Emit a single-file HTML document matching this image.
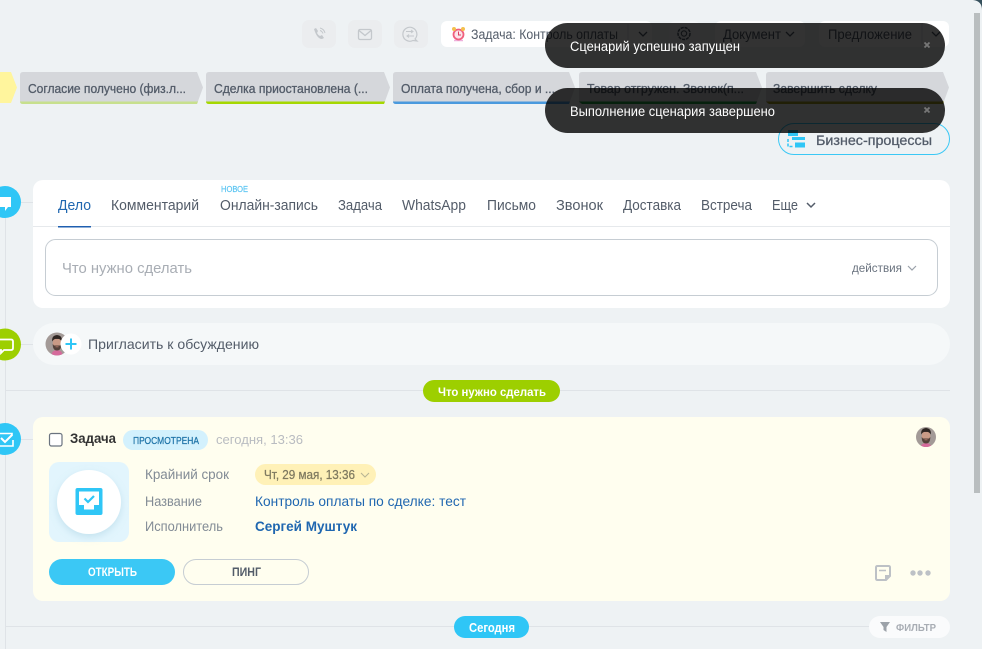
<!DOCTYPE html>
<html lang="ru"><head><meta charset="utf-8"><title>Задача</title>
<style>
html,body{margin:0;padding:0;width:982px;height:649px;overflow:hidden;background:#eef2f4}
svg{display:block}
text{font-family:"Liberation Sans","DejaVu Sans",sans-serif;white-space:pre}
.tab{font-size:14.5px;fill:#535c69}
.st{font-size:12.500px;fill:#535c69;stroke:#535c69;stroke-width:.3}
.lb{font-size:13.500px;fill:#828b95}
</style></head><body>
<svg width="982" height="649" viewBox="0 0 982 649" xmlns="http://www.w3.org/2000/svg">
<defs>
<filter id="sh" x="-30%" y="-30%" width="160%" height="170%"><feDropShadow dx="0" dy="3" stdDeviation="4" flood-color="#7fb6cc" flood-opacity=".3"/></filter>
<clipPath id="a1"><circle cx="57" cy="344" r="11.500"/></clipPath>
<clipPath id="a2"><circle cx="926" cy="437" r="10"/></clipPath>
<g id="face">
<rect x="-12" y="-12" width="24" height="24" fill="#a39a97"/>
<path d="M-6 12 Q-5 6 0 6 Q5 6 6 12Z" fill="#d56a9b"/>
<ellipse cx="0" cy="-1" rx="4.300" ry="6" fill="#c99a86"/>
<path d="M-4.800 -2.500 Q-5.500 -8.500 0 -9 Q5.500 -8.500 4.800 -2.500 Q3 -5.500 0 -5 Q-3 -5.500 -4.800 -2.500Z" fill="#2e2522"/>
<path d="M-4.300 0 Q-4.300 6.500 0 6.500 Q4.300 6.500 4.300 0 L3 1.500 H-3Z" fill="#54413a"/>
<path d="M-1.500 2.800 H1.500" stroke="#b5796a" stroke-width=".8"/>
</g>
</defs>
<rect width="982" height="649" fill="#eef2f4"/>
<path d="M973 0 Q982 1 982 10 V0Z" fill="#35505c"/>
<rect x="974" y="13" width="6" height="480" fill="#b9bebf"/>

<!-- top buttons -->
<rect x="302" y="20" width="34" height="28" rx="7" fill="#ebedef"/>
<rect x="348" y="20" width="34" height="28" rx="7" fill="#ebedef"/>
<rect x="394" y="20" width="34" height="28" rx="7" fill="#ebedef"/>
<path d="M314 29 l2 -1 2 3 -1 2 q1 2 3 3 l2 -1 2 3 -2 1 q-5 0 -8 -10z" fill="#c4c8cc"/>
<path d="M320 28 q4 1 5 5 M320 30.500 q2 .5 3 3" fill="none" stroke="#c4c8cc" stroke-width="1"/>
<rect x="358.500" y="29.500" width="13" height="10" rx="1.500" fill="none" stroke="#c4c8cc" stroke-width="1.300"/>
<path d="M359 30.500 L365 35.500 L371 30.500" fill="none" stroke="#c4c8cc" stroke-width="1.300"/>
<path d="M417 41 L415 39 A7 7 0 1 0 413 40.500 L417 41Z" fill="none" stroke="#c4c8cc" stroke-width="1.200"/>
<path d="M406 31.500 h7 m-2 -1.500 l2 1.500 -2 1.500 M414 36 h-7 m2 -1.500 l-2 1.500 2 1.500" fill="none" stroke="#c4c8cc" stroke-width="1"/>

<rect x="441" y="21" width="211" height="26" rx="6" fill="#fff"/>
<path d="M454 40.500 h9" stroke="#eeb0dc" stroke-width="1.500"/>
<circle cx="458.500" cy="34.500" r="5" fill="#fbe4ea" stroke="#f0607e" stroke-width="1.800"/>
<path d="M458.500 31.500 V35 H461" fill="none" stroke="#d8405e" stroke-width="1"/>
<circle cx="454" cy="29" r="2" fill="#f4c04e"/><circle cx="463" cy="29" r="2" fill="#f4c04e"/>
<text x="471" y="39" font-size="13.500" fill="#535c69" textLength="147" lengthAdjust="spacingAndGlyphs">Задача: Контроль оплаты</text>
<path d="M628 24 V44" stroke="#e4e7ea"/>
<path d="M639 32 l4 4 4 -4" fill="none" stroke="#535c69" stroke-width="1.300"/>
<rect x="669" y="21" width="31" height="26" rx="6" fill="#f3f5f7"/>
<circle cx="684" cy="33.500" r="6" fill="none" stroke="#535c69" stroke-width="1.500" stroke-dasharray="3.200 .9"/>
<circle cx="684" cy="33.500" r="2.700" fill="none" stroke="#535c69" stroke-width="1.100"/>
<rect x="715" y="21" width="90" height="26" rx="6" fill="#fff"/>
<text x="723" y="39" font-size="13.500" fill="#535c69" textLength="58" lengthAdjust="spacingAndGlyphs">Документ</text>
<path d="M786 32 l4 4 4 -4" fill="none" stroke="#535c69" stroke-width="1.300"/>
<rect x="819" y="21" width="130" height="26" rx="6" fill="#fff"/>
<text x="828" y="39" font-size="13.500" fill="#535c69" textLength="84" lengthAdjust="spacingAndGlyphs">Предложение</text>
<path d="M922 24 V44" stroke="#e4e7ea"/>
<path d="M932 32 l4 4 4 -4" fill="none" stroke="#535c69" stroke-width="1.300"/>

<!-- stages -->
<path d="M0 72 H11 L17 87.500 L11 103 H0Z" fill="#fff59d"/>
<path d="M20 75 Q20 72 23 72 H197 L203 87.500 L197 104 H23 Q20 104 20 101Z" fill="#d5d7db"/>
<path d="M20 101.500 Q20 104 23 104 H197 L198 101.500Z" fill="#c7e08d"/>
<path d="M206 75 Q206 72 209 72 H384 L390 87.500 L384 104 H209 Q206 104 206 101Z" fill="#d5d7db"/>
<path d="M206 101.500 Q206 104 209 104 H384 L385 101.500Z" fill="#a5d800"/>
<path d="M393 75 Q393 72 396 72 H569 L575 87.500 L569 104 H396 Q393 104 393 101Z" fill="#d5d7db"/>
<path d="M393 101.500 Q393 104 396 104 H569 L570 101.500Z" fill="#4a9ade"/>
<path d="M579 75 Q579 72 582 72 H756 L762 87.500 L756 104 H582 Q579 104 579 101Z" fill="#d5d7db"/>
<path d="M579 101.500 H757 L756 104 H582Z" fill="#1fa040"/>
<path d="M766 75 Q766 72 769 72 H943 L949 87.500 L943 104 H769 Q766 104 766 101Z" fill="#d5d7db"/>
<path d="M766 101.500 H944 L943 104 H769Z" fill="#a09a20"/>
<text class="st" x="28" y="93" textLength="158" lengthAdjust="spacingAndGlyphs">Согласие получено (физ.л...</text>
<text class="st" x="214" y="93" textLength="154" lengthAdjust="spacingAndGlyphs">Сделка приостановлена (...</text>
<text class="st" x="401" y="93" textLength="154" lengthAdjust="spacingAndGlyphs">Оплата получена, сбор и ...</text>
<text class="st" x="587" y="93" textLength="157" lengthAdjust="spacingAndGlyphs">Товар отгружен. Звонок(п...</text>
<text class="st" x="773" y="93" textLength="104" lengthAdjust="spacingAndGlyphs">Завершить сделку</text>

<!-- BP button -->
<rect x="778.500" y="123.500" width="171" height="31" rx="15.500" fill="#eef2f4" stroke="#3bc8f5"/>
<rect x="788" y="130" width="10" height="6" fill="#2fc6f6"/>
<rect x="792" y="137" width="13" height="3" fill="#2fc6f6"/>
<rect x="795" y="142.500" width="10" height="5" fill="#2fc6f6"/>
<path d="M788 139 v7.500 h5" fill="none" stroke="#2fc6f6" stroke-width="1.500" stroke-dasharray="3 1.500"/>
<text x="816" y="145" font-size="14" fill="#535c69" stroke="#535c69" stroke-width=".3" textLength="116" lengthAdjust="spacingAndGlyphs">Бизнес-процессы</text>

<!-- timeline -->
<path d="M5.500 218 V649" stroke="#dfe3e7"/>
<path d="M21 202.500 H33 M21 344.500 H33 M21 439.500 H33 M5 390.500 H950 M5 626.500 H950" stroke="#dfe3e7"/>
<circle cx="5" cy="202" r="16" fill="#2fc6f6"/>
<path d="M-2 197 H11 V207 H8 L5 211 V207 H-2Z" fill="#fff"/>
<circle cx="5" cy="344.500" r="16" fill="#9dcf00"/>
<path d="M-3 339.500 H11 Q13 339.500 13 341.500 V348 Q13 350 11 350 H4 L1 353 V350 H-3" fill="none" stroke="#fff" stroke-width="1.800"/>
<circle cx="5" cy="439" r="16" fill="#2fc6f6"/>
<path d="M-2 433.500 H12 V436 M-2 446 H13 V440" fill="none" stroke="#fff" stroke-width="1.600"/>
<path d="M1 438 l4 4 7 -7" fill="none" stroke="#fff" stroke-width="2"/>

<!-- editor card -->
<rect x="33" y="180" width="917" height="128" rx="10" fill="#fff"/>
<path d="M33 226.500 H950" stroke="#e6e9ec"/>
<rect x="58" y="226" width="33" height="1.500" fill="#1f5fb0"/>
<text x="221" y="192" font-size="8.500" fill="#5cc5f2" stroke="#5cc5f2" stroke-width=".2" textLength="27" lengthAdjust="spacingAndGlyphs">НОВОЕ</text>
<text class="tab" x="58" y="210" style="fill:#2067b0" textLength="33" lengthAdjust="spacingAndGlyphs">Дело</text>
<text class="tab" x="111" y="210" textLength="88" lengthAdjust="spacingAndGlyphs">Комментарий</text>
<text class="tab" x="220" y="210" textLength="98" lengthAdjust="spacingAndGlyphs">Онлайн-запись</text>
<text class="tab" x="338" y="210" textLength="44" lengthAdjust="spacingAndGlyphs">Задача</text>
<text class="tab" x="402" y="210" textLength="64" lengthAdjust="spacingAndGlyphs">WhatsApp</text>
<text class="tab" x="487" y="210" textLength="49" lengthAdjust="spacingAndGlyphs">Письмо</text>
<text class="tab" x="556" y="210" textLength="47" lengthAdjust="spacingAndGlyphs">Звонок</text>
<text class="tab" x="623" y="210" textLength="58" lengthAdjust="spacingAndGlyphs">Доставка</text>
<text class="tab" x="701" y="210" textLength="51" lengthAdjust="spacingAndGlyphs">Встреча</text>
<text class="tab" x="772" y="210" textLength="26" lengthAdjust="spacingAndGlyphs">Еще</text>
<path d="M807 203 l4 4 4 -4" fill="none" stroke="#535c69" stroke-width="1.500"/>
<rect x="45.500" y="239.500" width="892" height="56" rx="10" fill="#fff" stroke="#c6cdd3"/>
<text x="62" y="273" font-size="15" fill="#a8adb4" textLength="130" lengthAdjust="spacingAndGlyphs">Что нужно сделать</text>
<text x="852" y="272" font-size="12" fill="#6a737f" textLength="50" lengthAdjust="spacingAndGlyphs">действия</text>
<path d="M908 266 l4 4 4 -4" fill="none" stroke="#9aa1a9" stroke-width="1.200"/>

<!-- invite -->
<rect x="33" y="323" width="917" height="42" rx="21" fill="#f5f8f9"/>
<g clip-path="url(#a1)"><use href="#face" x="57" y="344"/></g>
<circle cx="71" cy="344" r="10.500" fill="#fff"/>
<path d="M71 338.500 V349.500 M65.500 344 H76.500" stroke="#2fc6f6" stroke-width="2"/>
<text x="88" y="349" font-size="14" fill="#535c69" textLength="171" lengthAdjust="spacingAndGlyphs">Пригласить к обсуждению</text>

<!-- pill -->
<rect x="423" y="380" width="137" height="22" rx="11" fill="#9dcf00"/>
<text x="438" y="396" font-size="12" font-weight="bold" fill="#fff" textLength="108" lengthAdjust="spacingAndGlyphs">Что нужно сделать</text>

<!-- task card -->
<rect x="33" y="417" width="917" height="184" rx="10" fill="#fffeef"/>
<rect x="49.500" y="433.500" width="12.500" height="12.500" rx="2" fill="#fff" stroke="#6a737f" stroke-width="1.200"/>
<text x="70" y="443" font-size="13.500" font-weight="bold" fill="#333" textLength="46" lengthAdjust="spacingAndGlyphs">Задача</text>
<rect x="123" y="430" width="85" height="20" rx="10" fill="#d3f1fd"/>
<text x="133" y="444" font-size="10.500" fill="#1f74a8" stroke="#1f74a8" stroke-width=".25" textLength="66" lengthAdjust="spacingAndGlyphs">ПРОСМОТРЕНА</text>
<text x="216" y="444" font-size="13" fill="#b9bcc1" textLength="87" lengthAdjust="spacingAndGlyphs">сегодня, 13:36</text>
<g clip-path="url(#a2)"><use href="#face" x="926" y="437"/></g>

<rect x="49" y="462" width="80" height="80" rx="10" fill="#e2f5fd"/>
<circle cx="89" cy="502" r="32" fill="#fff" filter="url(#sh)"/>
<rect x="75.500" y="488" width="27" height="27" rx="2" fill="#2fc6f6"/>
<path d="M79 491.500 H99 V505 H94 V509.500 H84 V505 H79Z" fill="#fff"/>
<path d="M84.500 498.500 l3.500 3.500 6 -6" fill="none" stroke="#2fc6f6" stroke-width="2.200"/>

<text class="lb" x="145" y="479" textLength="84" lengthAdjust="spacingAndGlyphs">Крайний срок</text>
<text class="lb" x="145" y="506" textLength="57" lengthAdjust="spacingAndGlyphs">Название</text>
<text class="lb" x="145" y="531" textLength="78" lengthAdjust="spacingAndGlyphs">Исполнитель</text>
<rect x="255" y="464" width="121" height="21" rx="10.500" fill="#fff1b7"/>
<text x="264" y="479" font-size="12.500" fill="#7f7a60" stroke="#7f7a60" stroke-width=".25" textLength="91" lengthAdjust="spacingAndGlyphs">Чт, 29 мая, 13:36</text>
<path d="M361 473 l4 4 4 -4" fill="none" stroke="#b9b494" stroke-width="1.100"/>
<text x="255" y="506" font-size="14" fill="#2067b0" textLength="211" lengthAdjust="spacingAndGlyphs">Контроль оплаты по сделке: тест</text>
<text x="255" y="531" font-size="14" font-weight="bold" fill="#2067b0" textLength="102" lengthAdjust="spacingAndGlyphs">Сергей Муштук</text>

<rect x="49" y="559" width="126" height="26" rx="13" fill="#3bc8f5"/>
<text x="88" y="576" font-size="11.500" font-weight="bold" fill="#fff" textLength="49" lengthAdjust="spacingAndGlyphs">ОТКРЫТЬ</text>
<rect x="183.500" y="559.500" width="125" height="25" rx="12.500" fill="#fffeef" stroke="#c6cdd3"/>
<text x="232" y="576" font-size="11.500" font-weight="bold" fill="#535c69" textLength="29" lengthAdjust="spacingAndGlyphs">ПИНГ</text>

<path d="M877.500 566 H888.500 Q890 566 890 567.500 V576 L886 580 H877.500 Q876 580 876 578.500 V567.500 Q876 566 877.500 566Z" fill="none" stroke="#bdc1c6" stroke-width="2"/>
<path d="M885 581 V575 H891Z" fill="#bdc1c6"/>
<path d="M879 570.500 H886" stroke="#bdc1c6" stroke-width="1.500"/>
<circle cx="913" cy="573" r="2.700" fill="#bdc1c6"/><circle cx="920" cy="573" r="2.700" fill="#bdc1c6"/><circle cx="928" cy="573" r="2.700" fill="#bdc1c6"/>

<!-- bottom -->
<rect x="454" y="616" width="75" height="22" rx="11" fill="#2fc6f6"/>
<text x="469" y="632" font-size="12.500" font-weight="bold" fill="#fff" textLength="46" lengthAdjust="spacingAndGlyphs">Сегодня</text>
<rect x="869" y="616" width="81" height="22" rx="11" fill="#fafbfc"/>
<path d="M880 622 H890 L886.500 627 V632 L883.500 630 V627Z" fill="#9ca2a9"/>
<text x="896" y="631" font-size="10.500" font-weight="bold" fill="#a8adb4" textLength="40" lengthAdjust="spacingAndGlyphs">ФИЛЬТР</text>

<!-- toasts -->
<rect x="545" y="23" width="400" height="45" rx="22.500" fill="#000" fill-opacity=".8"/>
<text x="570" y="51" font-size="13.500" fill="#fff" textLength="170" lengthAdjust="spacingAndGlyphs">Сценарий успешно запущен</text>
<path d="M924.500 42.500 l5 5 m0 -5 l-5 5" stroke="#777" stroke-width="1.800"/>
<rect x="545" y="88" width="400" height="45" rx="22.500" fill="#000" fill-opacity=".8"/>
<text x="570" y="116" font-size="14" fill="#fff" textLength="205" lengthAdjust="spacingAndGlyphs">Выполнение сценария завершено</text>
<path d="M924.500 107.500 l5 5 m0 -5 l-5 5" stroke="#777" stroke-width="1.800"/>
</svg>
</body></html>
